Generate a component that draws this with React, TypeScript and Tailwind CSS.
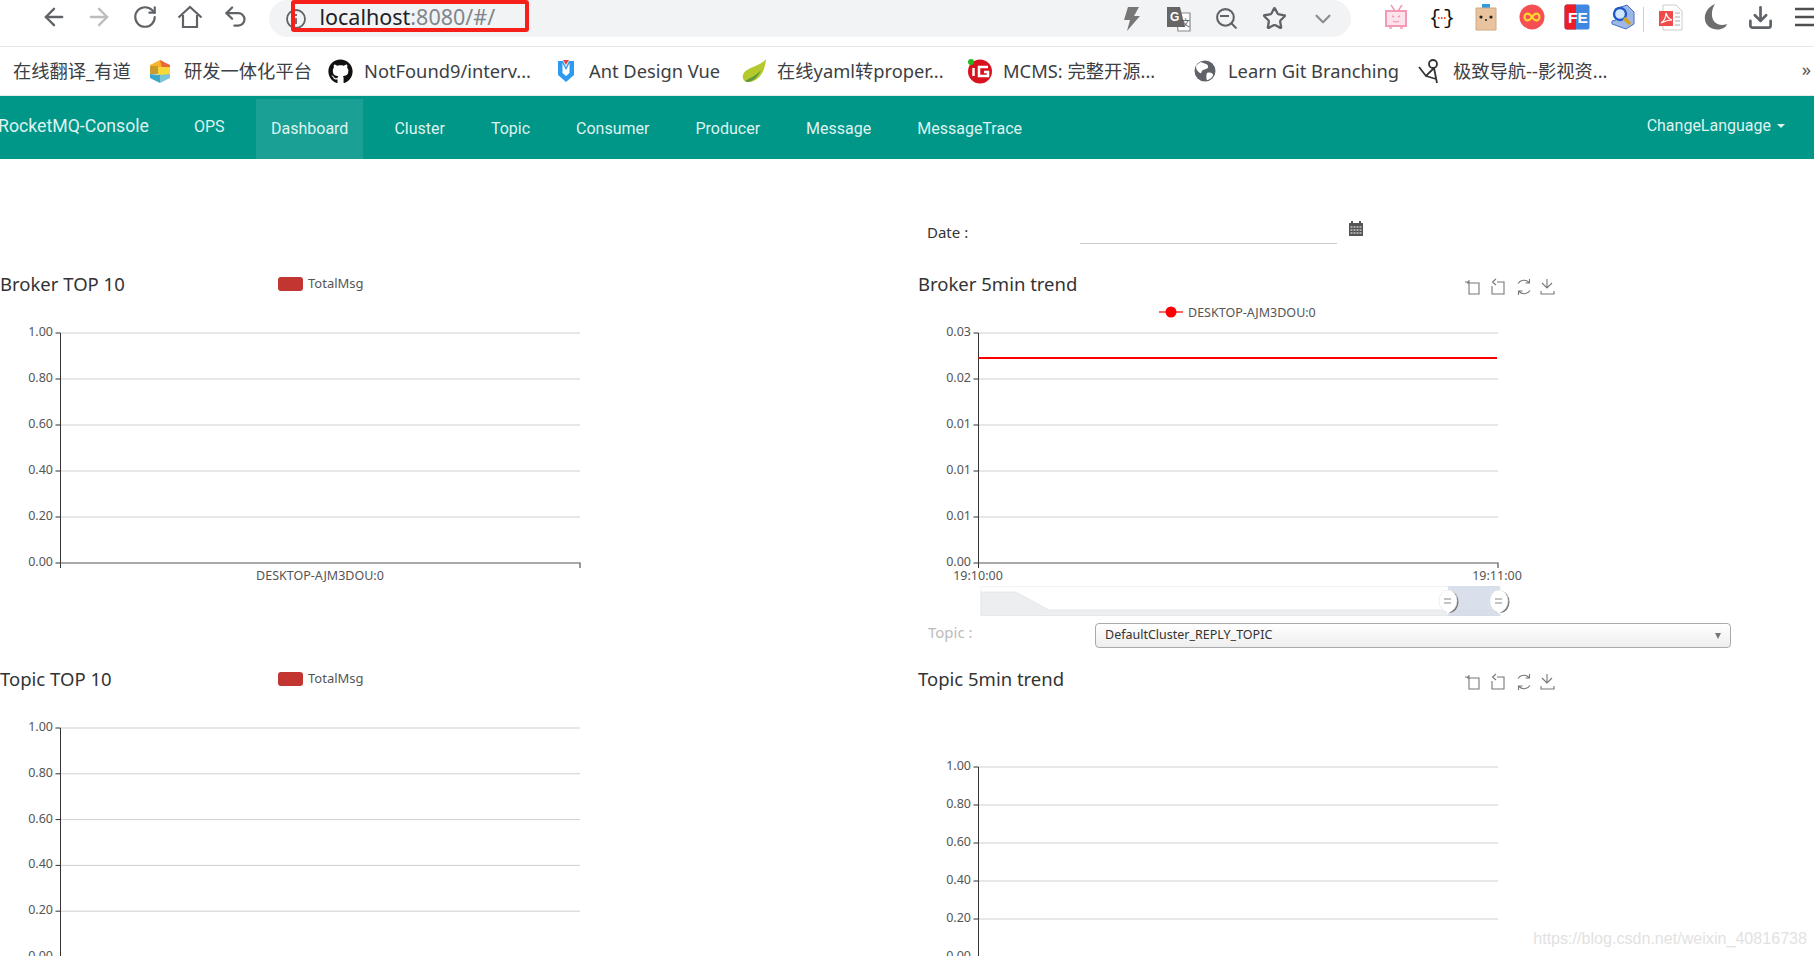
import { ArrowLeft, ArrowRight, ChevronDown, Download, RotateCw, Search, Star, Undo2 } from "lucide-react";
import { FaGithub } from "react-icons/fa";

const bookmarks = [
    { label: "研发一体化平台", icon: "cube", width: "w-[180px]" },
    { label: "NotFound9/interv...", icon: "github", width: "w-[225px]" },
    { label: "Ant Design Vue", icon: "ant", width: "w-[188px]" },
    { label: "在线yaml转proper...", icon: "leaf", width: "w-[226px]" },
    { label: "MCMS: 完整开源...", icon: "mcms", width: "w-[225px]" },
    { label: "Learn Git Branching", icon: "globe", width: "w-[225px]" },
    { label: "极致导航--影视资...", icon: "figure", width: "w-[350px]" },
];

const navItems = ["Cluster", "Topic", "Consumer", "Producer", "Message", "MessageTrace"];

function BookmarkIcon({ name }: { name: string }) {
    if (name === "github") return <FaGithub className="text-[25px] text-[#111] -ml-[2px]" />;
    if (name === "cube") {
        return (
            <svg width="26" height="26" viewBox="0 0 26 26" className="-ml-[2px]">
                <path d="M3 7 13 2l4 2-4 7-10 0z" fill="#f5b52e" />
                <path d="M13 2l10 5v5l-8-1z" fill="#e8683a" />
                <path d="M3 8h8v8H3z" fill="#c99a2e" />
                <path d="M11 9h12v8H11z" fill="#f7d93c" />
                <path d="M3 16l10 1v8L3 20z" fill="#3aa7c9" />
                <path d="M13 17l10-1v4l-10 5z" fill="#7cc4d8" />
            </svg>
        );
    }
    if (name === "ant") {
        return (
            <svg width="24" height="26" viewBox="0 0 24 26">
                <path d="M4 3h5l3 6 3-6h5v14l-8 7-8-7z" fill="#2f9bf0" />
                <path d="M8.5 5v10l3.5 3 3.5-3V5l-3.5 7z" fill="#fff" />
                <path d="M9 2h6l-3 5z" fill="#e8453c" />
            </svg>
        );
    }
    if (name === "leaf") {
        return (
            <svg width="26" height="26" viewBox="0 0 26 26">
                <path d="M25 1C24 14 18 23 8 24 3 24 1 21 2 17 4 9 17 10 25 1z" fill="#b5c92c" />
                <path d="M4 23C9 20 15 18 20 12 17 19 12 24 6 24z" fill="#5f9a3a" />
            </svg>
        );
    }
    if (name === "mcms") {
        return (
            <svg width="26" height="26" viewBox="0 0 26 26">
                <circle cx="13" cy="13.5" r="12" fill="#d9121f" />
                <circle cx="4" cy="4" r="3" fill="#22b822" />
                <path d="M6.5 10v8" stroke="#fff" strokeWidth="2.5" />
                <path d="M21 9h-9v9h9v-4h-4" fill="none" stroke="#fff" strokeWidth="2.5" />
            </svg>
        );
    }
    if (name === "globe") {
        return (
            <svg width="24" height="24" viewBox="0 0 24 24">
                <circle cx="12" cy="12" r="10.5" fill="#5f6368" />
                <path d="M8 3c3 2 6 1 7 4s-3 3-5 4-1 4-3 3-4-4-4-6 3-4 5-5zM14 14c3-1 6 0 6 2s-3 4-5 5-2-5-1-7z" fill="#fff" />
            </svg>
        );
    }
    return (
        <svg width="26" height="28" viewBox="0 0 26 28" fill="none" stroke="#333" strokeWidth="1.8">
            <circle cx="16" cy="7" r="4" />
            <path d="M2 10l7 9 8-8M17 11l3 15M9 19l10 3" />
        </svg>
    );
}

function BrowserBar() {
    return (
        <div className="flex h-[47px] border-b border-[#e8e8e8] pl-[31px] overflow-hidden">
            {[
                <ArrowLeft key="b" size={28} color="#5f6368" />,
                <ArrowRight key="f" size={28} color="#bdbdbd" />,
                <RotateCw key="r" size={26} color="#5f6368" />,
                <svg key="h" width="26" height="26" viewBox="0 0 26 26" fill="none" stroke="#5f6368" strokeWidth="2.2">
                    <path d="M1.5 13.5 13 3l11.5 10.5M6 11v12h14V11" />
                </svg>,
                <Undo2 key="u" size={27} color="#5f6368" />,
            ].map((icon, i) => (
                <div key={i} className="w-[45.5px] h-[33px] flex items-center justify-center shrink-0">
                    {icon}
                </div>
            ))}
            <div className="relative ml-[10px] w-[1082px] h-[37px] shrink-0 bg-[#f1f3f4] rounded-[24px] flex items-center pl-[16px] pr-[4px]">
                <svg width="22" height="22" viewBox="0 0 22 22" fill="none" stroke="#5f6368" strokeWidth="1.8">
                    <circle cx="11" cy="11" r="9" />
                    <path d="M11 10v6M11 6v2" />
                </svg>
                <span className="ml-[13px] -mt-[3px] text-[21.5px] text-[#202124] font-['Noto_Sans',sans-serif]">
                    localhost<span className="text-[#80868b]">:8080/#/</span>
                </span>
                <div className="absolute left-[22px] top-0 w-[238px] h-[32px] border-[4px] border-[#f5201a] rounded-[3px]" />
                <div className="ml-auto flex">
                    {[
                        <svg key="z" width="22" height="26" viewBox="0 0 22 26" fill="#777">
                            <path d="M8 1h11l-5 9h6L7 25l3-11H4z" />
                        </svg>,
                        <svg key="t" width="26" height="26" viewBox="0 0 26 26">
                            <path d="M10 7h14v18H12z" fill="#fff" stroke="#8a8a8a" strokeWidth="1.2" />
                            <path d="M1 1h13l5 20H1z" fill="#666" />
                            <text x="4" y="15" fontSize="12" fontWeight="700" fill="#fff" fontFamily="Liberation Sans, sans-serif">G</text>
                            <text x="15" y="20" fontSize="9" fill="#555" fontFamily="Noto Sans CJK SC, sans-serif">文</text>
                        </svg>,
                        <div key="s" className="relative">
                            <Search size={25} color="#5f6368" />
                            <div className="absolute left-[6px] top-[9px] w-[9px] h-[2px] bg-[#5f6368]" />
                        </div>,
                        <Star key="st" size={25} color="#5f6368" strokeWidth={2.2} />,
                        <ChevronDown key="c" size={26} color="#8d8d8d" />,
                    ].map((icon, i) => (
                        <div key={i} className="w-[48px] h-[34px] flex items-center justify-center">
                            {icon}
                        </div>
                    ))}
                </div>
            </div>
            <div className="ml-[23px] flex shrink-0">
                {[
                    <svg key="1" width="24" height="26" viewBox="0 0 24 26" fill="none" stroke="#f59ab5" strokeWidth="2">
                        <rect x="2" y="7" width="20" height="15" fill="#fde3ec" />
                        <path d="M7 1l4 6M18 1l-4 6M5 24h3M16 24h3M8 12l2 1M16 12l-2 1M9 17q3 2 6 0" strokeWidth="1.5" />
                    </svg>,
                    <svg key="2" width="26" height="26" viewBox="0 0 26 26">
                        <text x="0" y="20" fontSize="20" fill="#111" fontFamily="Liberation Mono, monospace">{"{"}</text>
                        <text x="14" y="20" fontSize="20" fill="#111" fontFamily="Liberation Mono, monospace">{"}"}</text>
                        <path d="M9 14h1.5M12 14h1.5M15 14h1.5" stroke="#f0562a" strokeWidth="2" />
                    </svg>,
                    <svg key="3" width="24" height="28" viewBox="0 0 24 28" className="-ml-[2px]">
                        <path d="M8 1h8v4H8z" fill="#2f9be6" />
                        <path d="M2 5h20v22H2z" fill="#e8c39e" stroke="#cfa884" />
                        <circle cx="7" cy="14" r="1.6" fill="#222" />
                        <circle cx="17" cy="14" r="1.6" fill="#222" />
                        <path d="M11 17h2" stroke="#222" strokeWidth="1.5" />
                    </svg>,
                    <svg key="4" width="26" height="26" viewBox="0 0 26 26">
                        <circle cx="13" cy="13" r="12.5" fill="#f44f53" />
                        <path d="M13 13c-2-3-4-4-6-3s-2 5 0 6 4 0 6-3 4-4 6-3 2 5 0 6-4 0-6-3z" fill="none" stroke="#ffd530" strokeWidth="2.2" />
                    </svg>,
                    <svg key="5" width="26" height="26" viewBox="0 0 26 26" className="-ml-[2px]">
                        <rect x="0.5" y="0.5" width="25" height="25" rx="2.5" fill="#3f87e0" />
                        <path d="M3 0.5h9v25H3q-2.500 0-2.500-2.500v-20Q0.500 0.500 3 0.500z" fill="#ee1c25" />
                        <text x="4" y="19" fontSize="15.500" fontWeight="700" fill="#fff" fontFamily="Liberation Sans, sans-serif">FE</text>
                    </svg>,
                    <svg key="6" width="24" height="26" viewBox="0 0 24 26">
                        <path d="M4 5 16 1l7 7v12l-8 5-14-5v-3l4-1z" fill="#9db8e8" stroke="#4a6fc0" />
                        <circle cx="9" cy="10" r="6" fill="#cfe6fb" stroke="#1f58c8" strokeWidth="2.4" />
                        <path d="M13 14l6 6" stroke="#d6a21e" strokeWidth="3.500" />
                    </svg>,
                    <div key="7" className="relative flex ml-[5px]">
                        <div className="absolute -left-[15px] top-[3px] w-px h-[25px] bg-[#cfcfcf]" />
                        <svg width="26" height="27" viewBox="0 0 26 27">
                            <path d="M5 1h13l6 6v19H5z" fill="#fff" stroke="#ccc" />
                            <path d="M17 9h5M17 13h5M17 17h5M17 21h5" stroke="#aaa" />
                            <rect x="1" y="7" width="14" height="15" fill="#ee4b4b" />
                            <path d="M3 19c3-2 5-6 5-10 1 4 3 6 6 7-4 0-7 1-11 3z" fill="none" stroke="#fff" strokeWidth="1.2" />
                        </svg>
                    </div>,
                    <svg key="8" width="26" height="28" viewBox="0 0 26 28" className="ml-[5px]">
                        <path d="M12 1C5 4 1 10 2 17c1 7 9 11 16 9 3-1 5-2 6-5-8 3-14-1-15-8-.5-5 1-9 3-12z" fill="#6d6d6d" />
                    </svg>,
                    <Download key="9" size={27} color="#5f6368" strokeWidth={2.4} className="ml-[3px]" />,
                    <svg key="10" width="20" height="22" viewBox="0 0 20 22" stroke="#4f4f4f" strokeWidth="2.4">
                        <path d="M0 3h20M0 11h20M0 19h20" />
                    </svg>,
                ].map((icon, i) => (
                    <div key={i} className="w-[45.4px] h-[34px] flex items-center justify-center">
                        {icon}
                    </div>
                ))}
            </div>
        </div>
    );
}

function BookmarkBar() {
    return (
        <div className="relative flex items-center h-[49px] pl-[13px] text-[18.3px] text-[#3c4043] font-['Noto_Sans','Noto_Sans_CJK_SC',sans-serif] whitespace-nowrap border-b border-[#e4ecea]">
            <span className="w-[135px] shrink-0">在线翻译_有道</span>
            {bookmarks.map((item) => (
                <div key={item.label} className={`${item.width} shrink-0 flex items-center`}>
                    <div className="w-[26px] h-[28px] flex items-center justify-center mr-[10px]">
                        <BookmarkIcon name={item.icon} />
                    </div>
                    <span>{item.label}</span>
                </div>
            ))}
            <span className="absolute right-[3px] top-[8px] text-[#555]">»</span>
        </div>
    );
}

function NavBar() {
    return (
        <div className="flex h-[63px] pt-[3px] bg-[#009688] text-[#dff3f0] font-['Roboto',sans-serif] text-[16px]">
            <div className="-ml-[2px] w-[196px] h-[54px] flex items-center text-[17.7px] whitespace-nowrap">RocketMQ-Console</div>
            <div className="w-[54px] h-[54px] pt-[1px] flex items-center">OPS</div>
            <div className="ml-[8px] px-[15px] h-[60px] flex items-center bg-[#1aa094]">Dashboard</div>
            {navItems.map((item) => (
                <div key={item} className="ml-[16px] first:ml-[15px] px-[15px] h-[60px] flex items-center">
                    {item}
                </div>
            ))}
            <div className="ml-auto mr-[29px] h-[54px] flex items-center">
                ChangeLanguage
                <span className="ml-[6px] w-0 h-0 border-x-[4px] border-x-transparent border-t-[4px] border-t-[#dff3f0]" />
            </div>
        </div>
    );
}

function TotalLegend() {
    return (
        <div className="flex items-center">
            <div className="w-[25px] h-[14px] rounded-[3px] bg-[#c23531]" />
            <span className="ml-[5px] text-[13px] text-[#555]">TotalMsg</span>
        </div>
    );
}

function Toolbox() {
    return (
        <svg width="110" height="20" viewBox="0 0 110 20" fill="none" stroke="#777" strokeWidth="1.1">
            <path d="M3 6h12v11H5V3M1 5h4" />
            <path d="M33 5h7v12H28V9M32 2l-3.500 3 3.500 3" />
            <path d="M54 6.500a7 7 0 0 1 11-1M66 13.500a7 7 0 0 1-11 1M65.500 2v4h-4M54.500 18v-4h4" />
            <path d="M83 10V2M78 6l5 5 5-5M77 14v3h13v-3" />
        </svg>
    );
}

interface ChartProps {
    height: number;
    top: number;
    step: number;
    labels: string[];
    xLabels: { x: number; text: string }[];
    legend?: string;
    line?: number;
}

function Chart({ height, top, step, labels, xLabels, legend, line }: ChartProps) {
    const bottom = top + step * (labels.length - 1);
    return (
        <svg width="640" height={height} viewBox={`0 0 640 ${height}`} className="block" fontSize="12.5" fill="#555">
            {legend && (
                <g>
                    <path d="M241 7h24" stroke="#ff0000" strokeWidth="2" opacity="0.6" />
                    <circle cx="253" cy="7" r="5.500" fill="#ff0000" />
                    <text x="270" y="11.500">{legend}</text>
                </g>
            )}
            {labels.map((label, i) => {
                const y = top + step * i;
                return (
                    <g key={i}>
                        {i < labels.length - 1 && <path d={`M60.500 ${y}H580`} stroke="#cfcfcf" />}
                        <path d={`M55.500 ${y}H60.500`} stroke="#333" />
                        <text x="53" y={y + 3} textAnchor="end">{label}</text>
                    </g>
                );
            })}
            <path d={`M60.500 ${top}V${bottom + 5}`} stroke="#333" />
            <path d={`M60.500 ${bottom}H580V${bottom + 5}`} fill="none" stroke="#555" strokeWidth="1.2" />
            {line !== undefined && <path d={`M60.500 ${line}H579`} stroke="#ff0000" strokeWidth="2" />}
            {xLabels.map((l) => (
                <text key={l.text} x={l.x} y={bottom + 17} textAnchor="middle">{l.text}</text>
            ))}
        </svg>
    );
}

function DataZoom() {
    return (
        <svg width="640" height="30" viewBox="0 0 640 30" className="block">
            <rect x="63" y="0.500" width="519" height="29" fill="#fff" stroke="#f0f2f4" />
            <path d="M63 6H98L131 24H582V30H63z" fill="#eceef0" stroke="#dcdfe2" strokeWidth="0.6" />
            <rect x="530" y="0" width="52" height="30" fill="#d3dbe8" opacity="0.85" />
            {[530, 581].map((x) => (
                <g key={x}>
                    <ellipse cx={x + 1.5} cy="16" rx="9" ry="11" fill="#777" />
                    <ellipse cx={x} cy="15" rx="9" ry="11" fill="#fff" stroke="#e4e4e4" strokeWidth="0.6" />
                    <path d={`M${x - 5} 23L${x} 28L${x + 5} 23z`} fill="#fff" />
                    <path d={`M${x - 4} 13h7M${x - 4} 17h7`} stroke="#888" strokeWidth="1.2" />
                </g>
            ))}
        </svg>
    );
}

function ChartHeader({ title, legend, tools }: { title: string; legend?: boolean; tools?: boolean }) {
    return (
        <div className="relative h-[42px] flex items-center text-[18.5px] text-[#333]">
            <span className="whitespace-nowrap">{title}</span>
            {legend && (
                <div className="absolute left-[278px] top-[11px]">
                    <TotalLegend />
                </div>
            )}
            {tools && (
                <div className="absolute left-[546px] top-[14px]">
                    <Toolbox />
                </div>
            )}
        </div>
    );
}

const topLabels = ["1.00", "0.80", "0.60", "0.40", "0.20", "0.00"];

export default function App() {
    return (
        <div className="relative h-[956px] w-[1814px] overflow-hidden bg-white font-['Noto_Sans','Noto_Sans_CJK_SC',sans-serif]">
            <BrowserBar />
            <BookmarkBar />
            <NavBar />
            <div className="grid grid-cols-[918px_1fr] grid-rows-[104px_395px_300px]">
                <div />
                <div className="flex items-start pt-[62px] pl-[9px] text-[15px] text-[#333]">
                    <span className="w-[153px] h-[23px] leading-[23px]">Date :</span>
                    <div className="w-[257px] h-[23px] border-b border-[#ccc]" />
                    <svg width="14" height="15" viewBox="0 0 14 15" className="ml-[12px]" fill="#555">
                        <path d="M0 2h14v13H0z" />
                        <path d="M2 0h2v3H2zM10 0h2v3h-2z" />
                        <path d="M1.500 6h11M1.500 9h11M1.500 12h11" stroke="#fff" strokeDasharray="2 1" />
                    </svg>
                </div>

                <div>
                    <ChartHeader title="Broker TOP 10" legend />
                    <Chart height={290} top={28} step={46} labels={topLabels} xLabels={[{ x: 320, text: "DESKTOP-AJM3DOU:0" }]} />
                </div>
                <div>
                    <ChartHeader title="Broker 5min trend" tools />
                    <Chart
                        height={281}
                        top={28}
                        step={46}
                        labels={["0.03", "0.02", "0.01", "0.01", "0.01", "0.00"]}
                        xLabels={[
                            { x: 60, text: "19:10:00" },
                            { x: 579, text: "19:11:00" },
                        ]}
                        legend="DESKTOP-AJM3DOU:0"
                        line={53}
                    />
                    <DataZoom />
                    <div className="flex items-center mt-[7px] pl-[10px]">
                        <span className="w-[167px] -mt-[6px] text-[15px] text-[#bbb]">Topic :</span>
                        <div className="w-[636px] h-[25px] flex items-center justify-between px-[9px] rounded-[4px] border border-[#aaa] bg-gradient-to-b from-white to-[#eeeeee] text-[12.5px] text-[#333]">
                            <span>DefaultCluster_REPLY_TOPIC</span>
                            <span className="w-0 h-0 border-x-[3.5px] border-x-transparent border-t-[6px] border-t-[#777]" />
                        </div>
                    </div>
                </div>

                <div>
                    <ChartHeader title="Topic TOP 10" legend />
                    <Chart height={258} top={28} step={45.8} labels={topLabels} xLabels={[]} />
                </div>
                <div>
                    <ChartHeader title="Topic 5min trend" tools />
                    <Chart height={258} top={67} step={38} labels={topLabels} xLabels={[]} />
                </div>
            </div>
            <div className="absolute right-[7px] bottom-[6px] text-[16.1px] text-[#e2e2e2] font-['Liberation_Sans',sans-serif]">
                https://blog.csdn.net/weixin_40816738
            </div>
        </div>
    );
}
